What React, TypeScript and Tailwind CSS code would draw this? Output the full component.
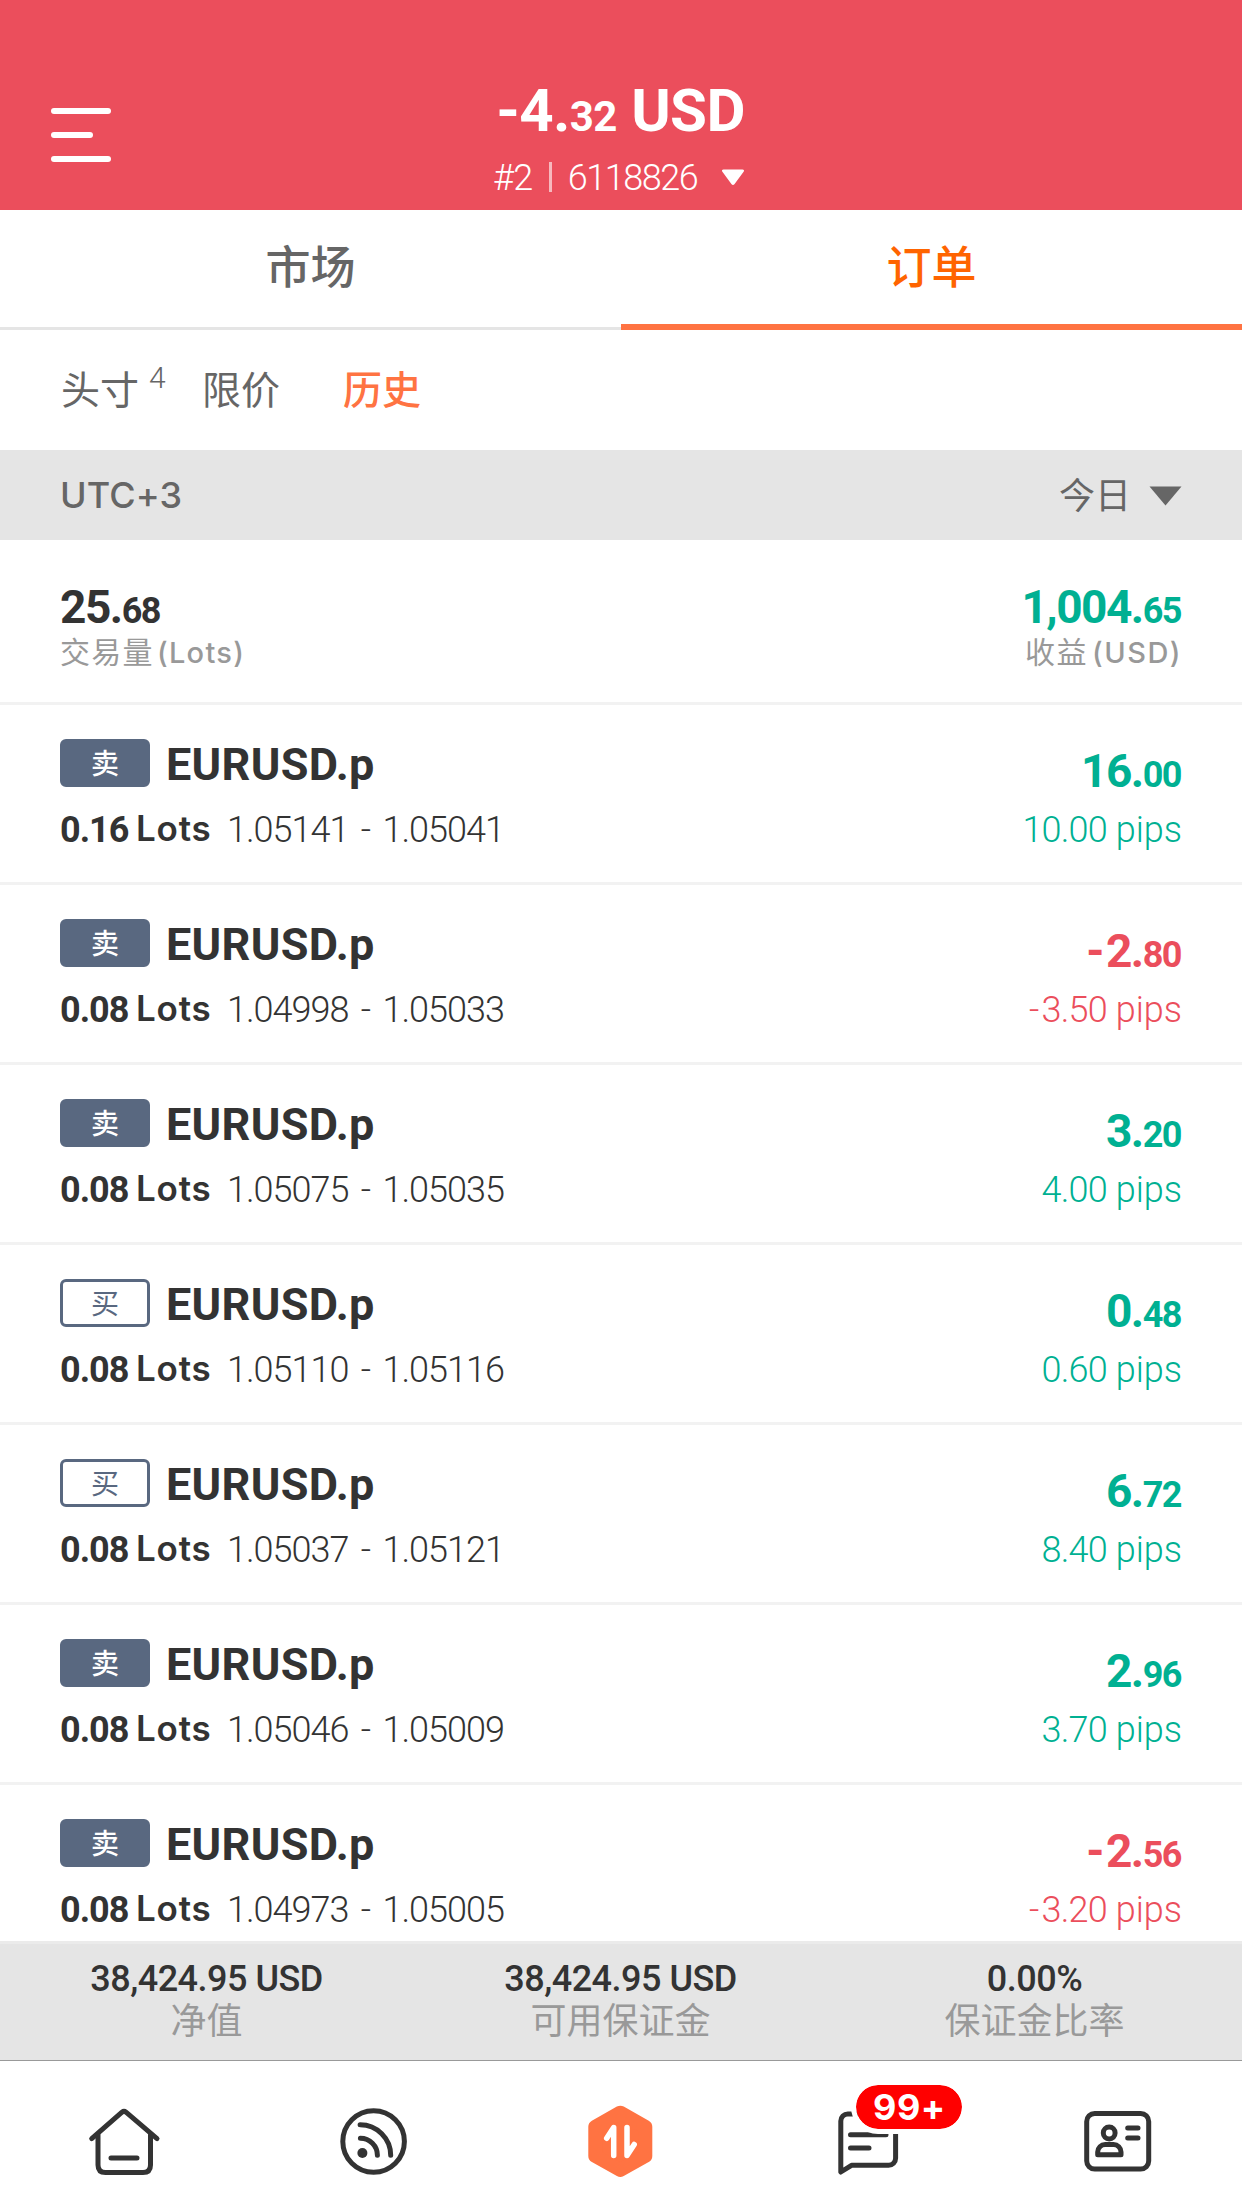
import type { ReactNode } from 'react';

type Order = {
  side: '卖' | '买';
  lots: string;
  open: string;
  close: string;
  profit: string;
  pips: string;
};

const orders: Order[] = [
  { side: '卖', lots: '0.16', open: '1.05141', close: '1.05041', profit: '16.00', pips: '10.00' },
  { side: '卖', lots: '0.08', open: '1.04998', close: '1.05033', profit: '-2.80', pips: '-3.50' },
  { side: '卖', lots: '0.08', open: '1.05075', close: '1.05035', profit: '3.20', pips: '4.00' },
  { side: '买', lots: '0.08', open: '1.05110', close: '1.05116', profit: '0.48', pips: '0.60' },
  { side: '买', lots: '0.08', open: '1.05037', close: '1.05121', profit: '6.72', pips: '8.40' },
  { side: '卖', lots: '0.08', open: '1.05046', close: '1.05009', profit: '2.96', pips: '3.70' },
  { side: '卖', lots: '0.08', open: '1.04973', close: '1.05005', profit: '-2.56', pips: '-3.20' },
];

const account = [
  { value: '38,424.95 USD', label: '净值' },
  { value: '38,424.95 USD', label: '可用保证金' },
  { value: '0.00%', label: '保证金比率' },
];

function Signed({ value }: { value: string }) {
  return value.startsWith('-') ? (
    <>
      <span className="mr-[3px]">-</span>
      {value.slice(1)}
    </>
  ) : (
    <>{value}</>
  );
}

function Amount({ value }: { value: string }) {
  const [whole, cents] = value.split('.');
  return (
    <span className="mr-px text-[46px] leading-[46px] font-bold tracking-[-1.5px]">
      <Signed value={whole} />.<span className="text-[36px] leading-none">{cents}</span>
    </span>
  );
}

function OrderRow({ order }: { order: Order }) {
  const sell = order.side === '卖';
  const tone = order.profit.startsWith('-') ? 'text-[#eb4e5c]' : 'text-[#00b092]';
  return (
    <li className="flex h-[180px] shrink-0 justify-between border-b-[3px] border-[#f2f2f2] px-[60px]">
      <div className="pt-[34px]">
        <div className="flex h-12 gap-[16px]">
          <span
            className={`flex h-12 w-[90px] justify-center rounded-[6px] border-[3px] border-[#596880] font-['Noto_Sans_CJK_SC',sans-serif] text-[28px] leading-[41px] ${
              sell ? 'bg-[#596880] font-medium text-white' : 'bg-white text-[#596880]'
            }`}
          >
            {order.side}
          </span>
          <span className="pt-[2px] text-[45px] leading-[48px] font-bold tracking-[0.3px]">EURUSD.p</span>
        </div>
        <div className="mt-[24px] flex text-[36px] leading-[38px]">
          <span className="w-[76px] font-bold tracking-[-1px]">{order.lots}</span>
          <span className="w-[91px] font-['Inter',sans-serif] text-[35px] leading-[35px] font-semibold tracking-[0.8px]">
            Lots
          </span>
          <span className="font-[350] tracking-[-1px]">{order.open}</span>
          <span className="w-[34px] pl-px text-center font-[350]">-</span>
          <span className="font-[350] tracking-[-1px]">{order.close}</span>
        </div>
      </div>
      <div className={`flex flex-col items-end pt-[43px] ${tone}`}>
        <Amount value={order.profit} />
        <span className="mt-[18px] text-[36px] leading-[36px] font-[350]">
          <span className="tracking-[-0.8px]">
            <Signed value={order.pips} />
          </span>{' '}
          pips
        </span>
      </div>
    </li>
  );
}

function Icon({ children }: { children: ReactNode }) {
  return (
    <svg
      viewBox="0 0 72 72"
      className="h-[72px] w-[72px] overflow-visible"
      fill="none"
      stroke="#333333"
      strokeWidth="5"
      strokeLinecap="round"
      strokeLinejoin="round"
    >
      {children}
    </svg>
  );
}

export default function App() {
  return (
    <div className="flex h-[2208px] w-[1242px] flex-col overflow-hidden bg-white font-['Roboto','Noto_Sans_CJK_SC',sans-serif] text-[#333333]">
      <header className="relative flex h-[210px] shrink-0 flex-col items-center bg-[#eb4e5c] pt-[81px] text-white">
        <div className="absolute top-[108px] left-[51px] flex flex-col gap-[18px]">
          <span className="h-[6px] w-[60px] rounded-full bg-white" />
          <span className="h-[6px] w-[42px] rounded-full bg-white" />
          <span className="h-[6px] w-[60px] rounded-full bg-white" />
        </div>
        <h1 className="mr-px text-[60px] leading-[60px] font-bold tracking-[-0.6px]">
          -4.<span className="text-[42px] leading-none">32</span> USD
        </h1>
        <div className="mt-[18px] mr-[4px] flex h-[36px] items-center text-[36px] leading-[36px] font-[350]">
          <span className="pt-px tracking-[-0.5px]">#2</span>
          <span className="mx-[16px] h-[30px] w-[3px] bg-white/60" />
          <span className="pt-px tracking-[-1.5px]">6118826</span>
          <svg viewBox="0 0 24 17" className="mt-px ml-[24px] h-[17px] w-[24px]" fill="white">
            <path d="M2.5 0.5h19c1.5 0 2 1.2 1.1 2.2l-9.2 12.5c-.8 1-2 1-2.8 0L1.4 2.7C.5 1.7 1 .5 2.5.5z" />
          </svg>
        </div>
      </header>

      <nav className="flex h-[120px] shrink-0 text-center font-['Noto_Sans_CJK_SC',sans-serif] text-[45px] leading-[45px] font-medium">
        <div className="flex-1 border-b-[3px] border-[#e5e5e5] pt-[32px] text-[#666666]">市场</div>
        <div className="flex-1 border-b-[6px] border-[#ff7342] pt-[32px] text-[#ff6400]">订单</div>
      </nav>

      <div className="flex h-[120px] shrink-0 pt-[38px] pl-[61px] font-['Noto_Sans_CJK_SC',sans-serif] text-[39px] leading-[39px] text-[#666666]">
        <span>头寸</span>
        <span className="-mt-[5px] w-[63px] pl-[10px] font-['Roboto',sans-serif] text-[30px] leading-[30px] font-[350]">
          4
        </span>
        <span>限价</span>
        <span className="ml-[63px] font-medium text-[#ff7342]">历史</span>
      </div>

      <div className="flex h-[90px] shrink-0 items-center justify-between bg-[#e5e5e5] px-[60px] text-[36px] leading-[36px] text-[#666666]">
        <span className="font-['Inter',sans-serif] font-medium tracking-[0.1px]">UTC+3</span>
        <div className="flex items-center gap-[18px]">
          <span className="-mt-[4px] font-['Noto_Sans_CJK_SC',sans-serif]">今日</span>
          <svg viewBox="0 0 33 20" className="mt-px h-[20px] w-[33px]" fill="#666666">
            <path d="M0.5 0.5h32L16.5 19.5z" />
          </svg>
        </div>
      </div>

      <section className="flex h-[165px] shrink-0 justify-between border-b-[3px] border-[#f2f2f2] px-[60px] pt-[44px]">
        <div className="flex flex-col">
          <Amount value="25.68" />
          <span className="mt-[7px] font-['Inter','Noto_Sans_CJK_SC',sans-serif] text-[29px] leading-[30px] font-medium tracking-[1.3px] text-[#999999]">
            <span className="mr-[3px] text-[30px] leading-none font-normal">交易量</span>(Lots)
          </span>
        </div>
        <div className="flex flex-col items-end text-[#00b092]">
          <Amount value="1,004.65" />
          <span className="mt-[7px] font-['Inter','Noto_Sans_CJK_SC',sans-serif] text-[29px] leading-[30px] font-medium tracking-[1.5px] text-[#999999]">
            <span className="mr-[4px] text-[30px] leading-none font-normal">收益</span>(USD)
          </span>
        </div>
      </section>

      <ul className="flex min-h-0 flex-1 flex-col overflow-hidden">
        {orders.map((o, i) => (
          <OrderRow key={i} order={o} />
        ))}
      </ul>

      <section className="flex h-[120px] shrink-0 border-t-[3px] border-b border-t-[#ebebeb] border-b-[#999999] bg-[#e5e5e5] pt-[17px]">
        {account.map((a, i) => (
          <div key={i} className="flex flex-1 flex-col items-center text-[36px] leading-[36px]">
            <span className="mr-px font-medium tracking-[-0.5px]">{a.value}</span>
            <span className="mt-[3px] mr-px font-['Noto_Sans_CJK_SC',sans-serif] text-[#999999]">{a.label}</span>
          </div>
        ))}
      </section>

      <nav className="flex h-[147px] shrink-0 bg-white pt-[45px]">
        <div className="flex flex-1 justify-center">
          <Icon>
            <path d="M3.7 32.7L34 6.2q2-1.6 4 0L69 32.7" />
            <path d="M10 29V59q0 7.5 7.5 7.5H55q7.5 0 7.5-7.5V29M23 52H49" />
          </Icon>
        </div>
        <div className="flex flex-1 justify-center">
          <Icon>
            <circle cx="36.6" cy="35.5" r="30.8" />
            <path d="M23.1 18.7A30.6 30.6 0 0 1 53.7 49.3M23.4 32.3A17 17 0 0 1 40.4 49.3" />
            <circle cx="25.4" cy="47" r="5" fill="#333333" stroke="none" />
          </Icon>
        </div>
        <div className="flex flex-1 justify-center">
          <Icon>
            <path
              d="M35.3 6.7L60.3 20.8V50L35.3 64L10.3 50V20.8z"
              fill="#ff7342"
              stroke="#ff7342"
              strokeWidth="14"
            />
            <path d="M28.7 49.5V21.5L21.7 32.3M42 21.5V49.5L49.2 38.5" stroke="white" strokeWidth="5.5" />
          </Icon>
        </div>
        <div className="flex flex-1 justify-center">
          <div className="relative h-[72px] w-[72px]">
            <Icon>
              <path d="M7.8 66V15a7 7 0 0 1 7-7H62.6V52.3a7 7 0 0 1-7 7H18.5z" />
              <path d="M17.5 28.7H53M17.5 42H36" />
            </Icon>
            <span className="absolute -top-[26px] left-[18px] box-content flex h-[44px] w-[106px] justify-center rounded-full border-[5px] border-white bg-[#ff0000] bg-clip-padding font-['Inter',sans-serif] text-[36px] leading-[44px] font-bold tracking-[0.5px] text-white">
              99+
            </span>
          </div>
        </div>
        <div className="flex flex-1 justify-center">
          <Icon>
            <rect x="4.7" y="7.5" width="62" height="55.5" rx="8" />
            <circle cx="27.2" cy="27" r="5.9" />
            <path d="M15.7 48.8V46a7.5 7.5 0 0 1 7.5-7.5h8.3a7.5 7.5 0 0 1 7.5 7.5v2.8zM45.7 22H56M45.7 32H56" />
          </Icon>
        </div>
      </nav>
    </div>
  );
}
